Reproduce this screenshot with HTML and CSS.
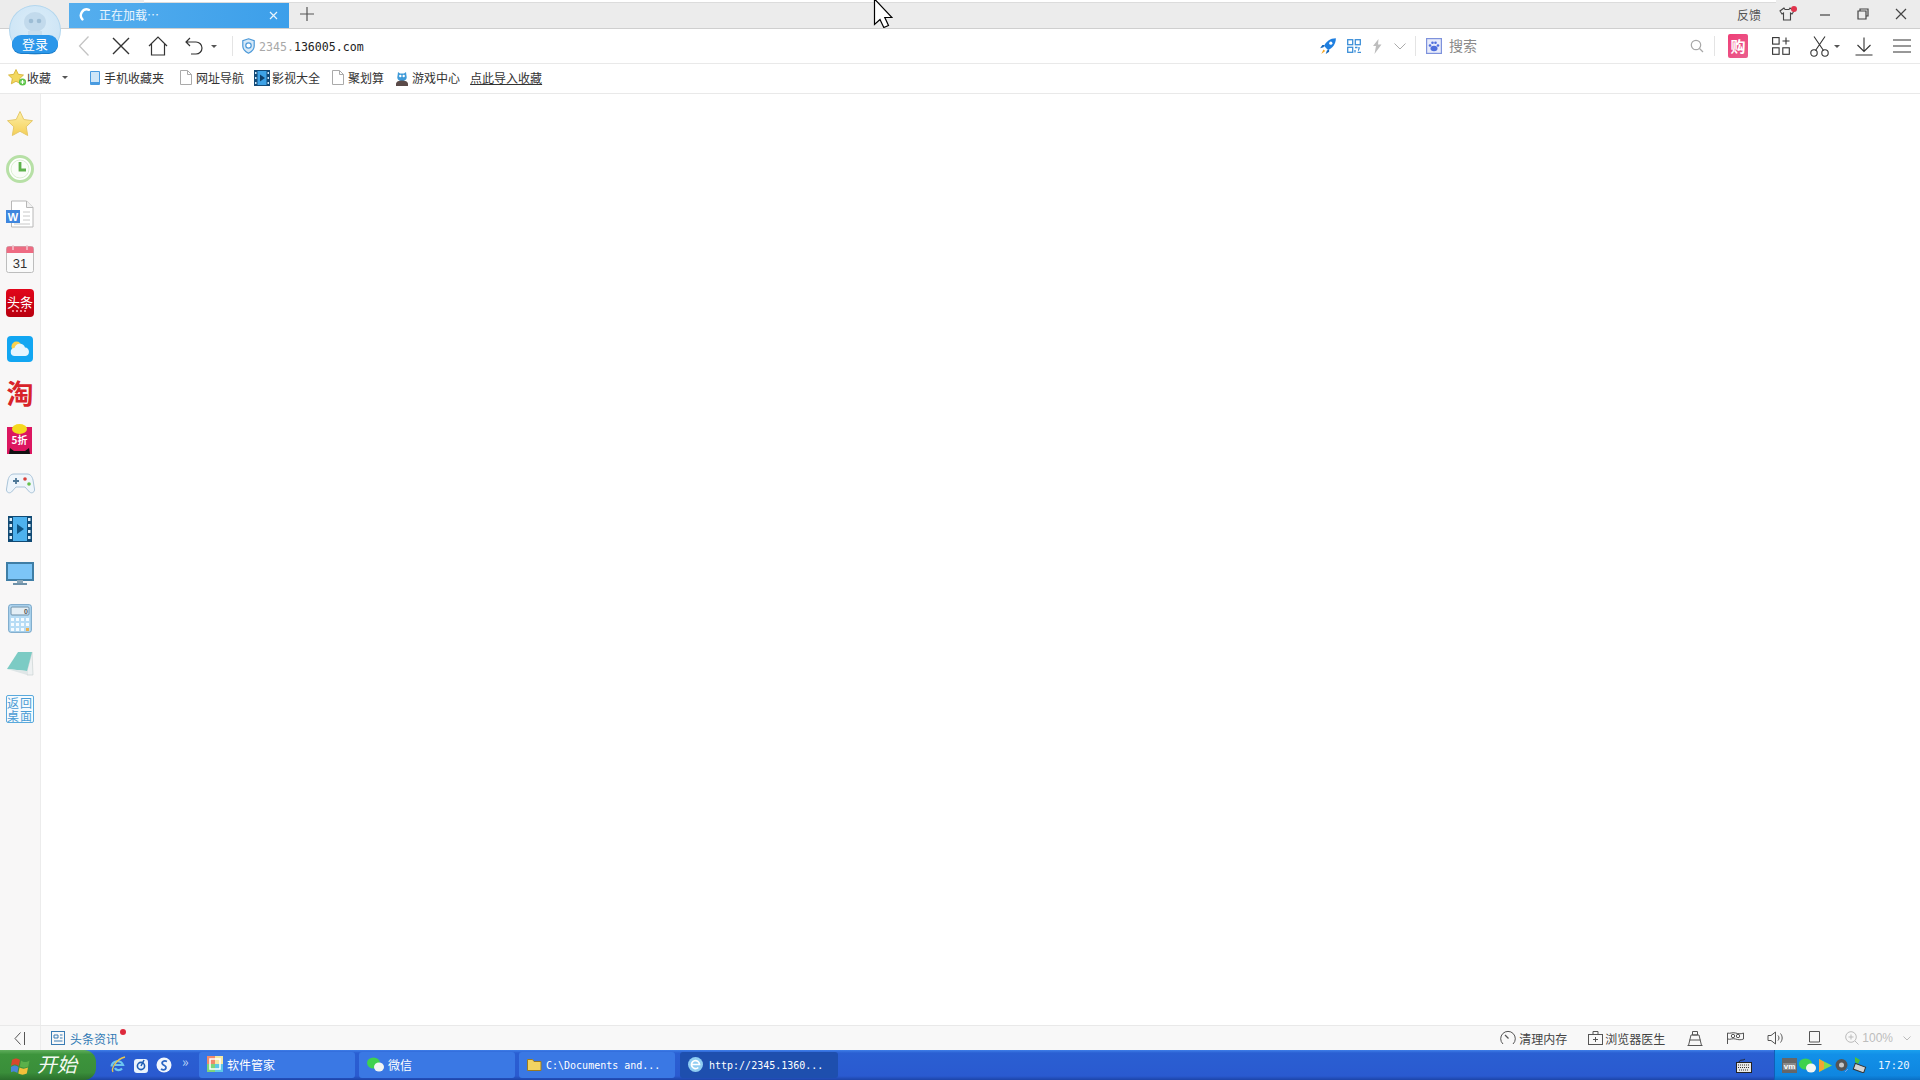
FILE: index.html
```html
<!DOCTYPE html>
<html lang="zh-CN">
<head>
<meta charset="utf-8">
<title>正在加载…</title>
<link rel="stylesheet" href="styles.css">
</head>
<body>
<div class="app">
  <header class="titlebar">
    <div class="top-strip"></div>
    <div class="tab">
      <svg class="spinner" width="15" height="15" viewBox="0 0 15 15"><path d="M10 1.800A6 6 0 0 0 3.400 11.400" fill="none" stroke="#fff" stroke-width="2.400" stroke-linecap="round"/></svg>
      <span class="tab-title">正在加载…</span>
      <svg class="tab-close" width="9" height="9" viewBox="0 0 9 9"><path d="M1 1l7 7M8 1l-7 7" stroke="#e8f4fd" stroke-width="1.2"/></svg>
    </div>
    <svg class="new-tab" width="14" height="14" viewBox="0 0 14 14"><path d="M7 0v14M0 7h14" stroke="#555" stroke-width="1.2"/></svg>
    <div class="win-tools">
      <span class="feedback">反馈</span>
      <span class="win-btn shirt">
        <svg width="16" height="16" viewBox="0 0 16 16"><path d="M5 2L1 5l2 3 1.5-1v7h7V7L13 8l2-3-4-3-1 1.5H6z" fill="none" stroke="#444" stroke-width="1.1"/></svg>
        <i class="shirt-dot"></i>
      </span>
      <span class="win-btn"><svg width="11" height="11" viewBox="0 0 11 11"><path d="M0 6h10" stroke="#444" stroke-width="1.2"/></svg></span>
      <span class="win-btn"><svg width="12" height="12" viewBox="0 0 12 12"><path d="M3 3V1h8v7H9M1 3h8v8H1z" fill="none" stroke="#444" stroke-width="1.2"/></svg></span>
      <span class="win-btn"><svg width="12" height="12" viewBox="0 0 12 12"><path d="M1 1l10 10M11 1L1 11" stroke="#444" stroke-width="1.2"/></svg></span>
    </div>
  </header>

  <nav class="toolbar">
    <div class="tool-left">
      <span class="tool"><svg width="12" height="22" viewBox="0 0 12 22"><path d="M10.5 1.5L1.5 11l9 9.5" fill="none" stroke="#c4c4c4" stroke-width="1.3"/></svg></span>
      <span class="tool"><svg width="18" height="18" viewBox="0 0 18 18"><path d="M1 1l16 16M17 1L1 17" stroke="#333" stroke-width="1.4"/></svg></span>
      <span class="tool"><svg width="20" height="20" viewBox="0 0 20 20"><path d="M1 10l9-9 9 9M3.500 8v11h13V8" fill="none" stroke="#333" stroke-width="1.2"/></svg></span>
      <span class="tool tool-undo"><svg width="18" height="18" viewBox="0 0 18 18"><path d="M5 1L1 5l4 4M1 5h10a5.500 5.500 0 0 1 0 12H6" fill="none" stroke="#333" stroke-width="1.2"/></svg></span>
      <i class="caret"></i>
      <i class="sep sep-url"></i>
      <svg class="shield" width="13" height="16" viewBox="0 0 13 16"><path d="M6.500 .8L12.200 2.800V8c0 3.500-3 6-5.700 7.200C3.800 14 .8 11.500 .8 8V2.800z" fill="#d6e9f8" stroke="#4a98d8" stroke-width="1.200"/><circle cx="6.500" cy="7.500" r="2.700" fill="#fff" stroke="#4a98d8" stroke-width="1.200"/></svg>
      <span class="url"><span class="url-dim">2345.</span>136005.com</span>
    </div>
    <div class="tool-right">
      <svg class="i-rocket" width="18" height="18" viewBox="0 0 16 16"><path d="M15 1C10 1 6 4 4.500 8l3.500 3.500C12 10 15 6 15 1z" fill="#1f7fe0"/><circle cx="10.500" cy="5.500" r="1.400" fill="#fff"/><path d="M4 9L1 10l2-3 2 0zM7 12l-1 3 3-2 0-2z" fill="#1266bb"/><path d="M4 11l1.500 1.500L2 15z" fill="#f5a623"/></svg>
      <svg class="i-qr" width="14" height="14" viewBox="0 0 14 14" fill="none" stroke="#3c8fd8" stroke-width="1.300"><rect x=".7" y=".7" width="5" height="5"/><rect x="8.300" y=".7" width="5" height="5"/><rect x=".7" y="8.300" width="5" height="5"/><path d="M8 8.500h2.500M12 8v2.500M8 11v2.500M10.500 13.300H14M11 11h1" /></svg>
      <svg class="i-bolt" width="10" height="15" viewBox="0 0 10 15"><path d="M6.500 0L1 7h3L2.500 15 9.500 5.500H6z" fill="#bdbdbd"/></svg>
      <svg class="i-chev" width="12" height="7" viewBox="0 0 12 7"><path d="M.5 .5L6 6l5.500-5.500" fill="none" stroke="#aaa"/></svg>
      <i class="sep sep-search"></i>
      <svg class="i-paw" width="16" height="16" viewBox="0 0 16 16"><rect x=".6" y=".6" width="14.800" height="14.800" fill="#e8ecfb" stroke="#7e92dc" stroke-width="1.200"/><g fill="#4f6fdc"><ellipse cx="8" cy="10.500" rx="3.500" ry="2.800"/><circle cx="4" cy="7.500" r="1.300"/><circle cx="6.500" cy="4.800" r="1.300"/><circle cx="9.500" cy="4.800" r="1.300"/><circle cx="12" cy="7.500" r="1.300"/></g></svg>
      <span class="search-text">搜索</span>
      <svg class="i-search" width="14" height="14" viewBox="0 0 14 14"><circle cx="6" cy="6" r="4.700" fill="none" stroke="#a8a8a8" stroke-width="1.200"/><path d="M9.500 9.500L13 13" stroke="#a8a8a8" stroke-width="1.200"/></svg>
      <i class="sep sep-gou"></i>
      <span class="gou">购</span>
      <svg class="i-apps" width="18" height="18" viewBox="0 0 18 18" fill="none" stroke="#333" stroke-width="1.100"><rect x=".6" y=".6" width="6.500" height="6.500"/><rect x=".6" y="10.800" width="6.500" height="6.500"/><rect x="10.800" y="10.800" width="6.500" height="6.500"/><path d="M14 .5v7M10.500 4h7"/></svg>
      <svg class="i-scissors" width="19" height="21" viewBox="0 0 19 21" fill="none" stroke="#333" stroke-width="1.100"><circle cx="4" cy="17" r="3.200"/><circle cx="15" cy="17" r="3.200"/><path d="M5.500 14.500L15 .5M13.500 14.500L4 .5"/></svg>
      <i class="caret caret-cut"></i>
      <svg class="i-down" width="18" height="19" viewBox="0 0 18 19" fill="none" stroke="#333" stroke-width="1.100"><path d="M9 .5v14M2.500 8L9 14.500 15.500 8M.5 18h17"/></svg>
      <svg class="i-menu" width="18" height="14" viewBox="0 0 18 14" stroke="#333" stroke-width="1.100"><path d="M0 1h18M0 7h18M0 13h18"/></svg>
    </div>
  </nav>

  <div class="bookmarks">
    <svg class="bm-star" width="20" height="18" viewBox="0 0 20 18"><path d="M8 .5l2.300 4.800 5.200.7-3.800 3.600.9 5.200L8 12.300 3.400 14.800l.9-5.200L.5 6l5.200-.7z" fill="#f3d860" stroke="#d2ad2c" stroke-width=".8"/><circle cx="14.500" cy="13" r="3.600" fill="#5ec44a"/><path d="M14.500 11v4M12.500 13h4" stroke="#fff" stroke-width="1.200"/></svg>
    <span class="bm-text bm-fav">收藏</span>
    <i class="caret caret-fav"></i>
    <span class="bm bm-phone">
      <svg width="10" height="14" viewBox="0 0 10 14"><rect width="10" height="14" rx="1" fill="#4a9be0"/><rect x="1" y="1" width="8" height="10" fill="#cfe6f8"/></svg>
      <span>手机收藏夹</span>
    </span>
    <span class="bm bm-nav">
      <svg width="12" height="15" viewBox="0 0 12 15"><path d="M.5 .5h7l4 4v10H.5zM7.500 .5v4h4" fill="#fff" stroke="#aaa"/></svg>
      <span>网址导航</span>
    </span>
    <span class="bm bm-film">
      <svg width="16" height="16" viewBox="0 0 16 16"><rect width="16" height="16" fill="#134a78"/><rect x="3.500" y="1" width="9" height="14" fill="#3ea2e6"/><path d="M6 4.500l5 3.500-5 3.500z" fill="#0e3f6b"/><path d="M1 2h1.500v2H1zM1 7h1.500v2H1zM1 12h1.500v2H1zM13.500 2H15v2h-1.500zM13.500 7H15v2h-1.500zM13.500 12H15v2h-1.500z" fill="#cfe9fb"/></svg>
      <span>影视大全</span>
    </span>
    <span class="bm bm-juhua">
      <svg width="12" height="15" viewBox="0 0 12 15"><path d="M.5 .5h7l4 4v10H.5zM7.500 .5v4h4" fill="#fff" stroke="#aaa"/></svg>
      <span>聚划算</span>
    </span>
    <span class="bm bm-game">
      <svg width="14" height="16" viewBox="0 0 14 16"><path d="M3 2l2 1.500h4L11 2l.5 4c1 3-1.500 5-4.500 5S1.500 9 2.500 6z" fill="#3f9ad8"/><circle cx="5.300" cy="6" r="1.200" fill="#fff"/><circle cx="8.700" cy="6" r="1.200" fill="#fff"/><path d="M1 14c0-2.500 3-3.500 6-3.500s6 1 6 3.500v2H1z" fill="#5a4a48"/></svg>
      <span>游戏中心</span>
    </span>
    <span class="bm-text bm-import">点此导入收藏</span>
  </div>

  <main class="workspace">
    <aside class="sidebar">
      <span class="side-item">
        <svg width="28" height="28" viewBox="0 0 28 28"><defs><linearGradient id="gStar" x1="0" y1="0" x2="0" y2="1"><stop offset="0" stop-color="#fdf0a8"/><stop offset="1" stop-color="#f5cf58"/></linearGradient></defs><path d="M14 1.500l3.800 8 8.700 1.200-6.300 6.100 1.500 8.700L14 21.300l-7.700 4.200 1.500-8.700L1.500 10.700l8.700-1.200z" fill="url(#gStar)" stroke="#e6c96a"/></svg>
      </span>
      <span class="side-item">
        <svg width="28" height="28" viewBox="0 0 28 28"><circle cx="14" cy="14" r="12.500" fill="#fff" stroke="#b7e0a6" stroke-width="3"/><circle cx="14" cy="14" r="9" fill="#fafdf8" stroke="#dbeed2"/><path d="M14 7v8h6" fill="none" stroke="#5eb24c" stroke-width="2.800"/></svg>
      </span>
      <span class="side-item">
        <svg width="28" height="28" viewBox="0 0 28 28"><path d="M5.500 1h15l6.500 6.500V27H5.500z" fill="#fff" stroke="#b8b8b8"/><path d="M20.500 1v6.500H27" fill="#f1f1f1" stroke="#b8b8b8"/><path d="M17 12h7M17 16h7M17 20h7M8 24h16" stroke="#c8c8c8"/><rect y="10" width="14" height="13" fill="#3f86de"/><text x="7" y="21" class="t-word">W</text></svg>
      </span>
      <span class="side-item">
        <svg width="28" height="28" viewBox="0 0 28 28"><rect x=".5" y="1.500" width="27" height="26" rx="2" fill="#fafafa" stroke="#bdbdbd"/><path d="M.5 8V3.500a2 2 0 0 1 2-2h23a2 2 0 0 1 2 2V8z" fill="#ee6b82"/><path d="M7 0v5M21 0v5" stroke="#f5c5cf" stroke-width="1.500"/><text x="14" y="23" class="t-cal">31</text></svg>
      </span>
      <span class="side-item side-toutiao">
        <span class="toutiao-text">头条</span>
        <i class="toutiao-dots"></i>
      </span>
      <span class="side-item">
        <svg width="26" height="26" viewBox="0 0 26 26"><rect width="26" height="26" rx="4" fill="#12a6f2"/><circle cx="9.500" cy="10.500" r="5" fill="#fbd24e"/><path d="M8 20a4 4 0 0 1-.5-8 5.500 5.500 0 0 1 10.500-.5 4.300 4.300 0 0 1 .5 8.500z" fill="#e6f5fe"/></svg>
      </span>
      <span class="side-item side-tao">淘</span>
      <span class="side-item">
        <svg width="26" height="30" viewBox="0 0 26 30"><rect y="3" width="25" height="27" fill="#dc1660"/><ellipse cx="12.500" cy="5" rx="7.500" ry="5" fill="#f5d91e"/><path d="M2 30l1-6 4 3h11l4-3 1 6z" fill="#111"/><text x="12.500" y="20" class="t-five">5折</text></svg>
      </span>
      <span class="side-item">
        <svg width="29" height="23" viewBox="0 0 29 23"><path d="M8 2h13c3 0 5 2 6 6l1.500 9c.5 3-2.500 5-5 3l-4.500-5H10l-4.500 5c-2.500 2-5.500 0-5-3L2 8c1-4 3-6 6-6z" fill="#eef5fb" stroke="#a9c3d8"/><path d="M7 9h6M10 6v6" stroke="#4e7897" stroke-width="1.800"/><circle cx="19" cy="7" r="1.800" fill="#d9413a"/><circle cx="23" cy="12" r="1.800" fill="#67c04c"/></svg>
      </span>
      <span class="side-item">
        <svg width="24" height="26" viewBox="0 0 24 26"><rect width="24" height="26" fill="#114a74"/><rect x="5" y="1" width="14" height="24" fill="#4eb2ee"/><path d="M9 8l7 5-7 5z" fill="#0f5584"/><path d="M1.500 2H4v3H1.500zM1.500 8H4v3H1.500zM1.500 14H4v3H1.500zM1.500 20H4v3H1.500zM20 2h2.500v3H20zM20 8h2.500v3H20zM20 14h2.500v3H20zM20 20h2.500v3H20z" fill="#e0f2fc"/></svg>
      </span>
      <span class="side-item">
        <svg width="28" height="23" viewBox="0 0 28 23"><rect x="1" y="1" width="26" height="17" fill="#7cc5f7" stroke="#3f7ea6" stroke-width="2"/><rect x="11" y="18" width="6" height="3" fill="#8aa6b8"/><rect x="7" y="21" width="14" height="2" fill="#6e91a8"/></svg>
      </span>
      <span class="side-item">
        <svg width="24" height="29" viewBox="0 0 24 29"><rect x=".7" y=".7" width="22.600" height="27.600" rx="2" fill="#b7dcf5" stroke="#6c9fc4"/><rect x="3" y="3" width="18" height="8" rx="1" fill="#e4eef5" stroke="#6c8fa8"/><text x="18" y="10" class="t-zero">0</text><path d="M3 14h3v3H3zM8 14h3v3H8zM13 14h3v3h-3zM3 19h3v3H3zM8 19h3v3H8zM13 19h3v3h-3zM3 24h3v3H3zM8 24h3v3H8zM13 24h3v3h-3z" fill="#f5fbff"/><path d="M18 14h3v3h-3zM18 19h3v3h-3z" fill="#f5fbff"/><path d="M18 24h3v3h-3z" fill="#e9b054"/></svg>
      </span>
      <span class="side-item">
        <svg width="28" height="25" viewBox="0 0 28 25"><path d="M26 1l1 23h-6v-4z" fill="#eef1f2" stroke="#c3cccd" stroke-width=".6"/><path d="M1 18L12 1h14l-5 19z" fill="#7ccbc4"/><path d="M1 18l20 2v4z" fill="#dfe6e7"/></svg>
      </span>
      <span class="side-item">
        <span class="back-desk">返回桌面</span>
      </span>
    </aside>
    <section class="page"></section>
  </main>

  <footer class="statusbar">
    <span class="collapse">
      <svg width="12" height="13" viewBox="0 0 12 13"><path d="M6.500 .5L1 6.500l5.500 6M10.500 0v13" fill="none" stroke="#555"/></svg>
    </span>
    <svg class="news-icon" width="14" height="14" viewBox="0 0 14 14" fill="none" stroke="#3a7cb4"><rect x=".5" y=".5" width="13" height="13"/><path d="M3 4h4v3H3zM9 4h2.500M9 7h2.500M3 10h8.500"/></svg>
    <span class="news-text">头条资讯<i class="news-dot"></i></span>
    <div class="status-right">
      <svg class="s-gauge" width="16" height="16" viewBox="0 0 16 16" fill="none" stroke="#555"><path d="M3 14A7.300 7.300 0 1 1 13 14"/><path d="M5 5l3.500 3.500" stroke-width="1.200"/></svg>
      <span class="s-text s-clean">清理内存</span>
      <svg class="s-doctor" width="15" height="14" viewBox="0 0 15 14" fill="none" stroke="#555"><rect x=".5" y="3.500" width="14" height="10"/><path d="M5 3.500V.5h5v3M7.500 6v5M5 8.500h5"/></svg>
      <span class="s-text s-doc-text">浏览器医生</span>
      <svg class="s-broom" width="16" height="15" viewBox="0 0 16 15" fill="none" stroke="#555"><path d="M5.500 4h5V.5h-5zM1.500 14.500L4 4h8l2.500 10.500zM.5 14.500h15M2.500 9h11"/></svg>
      <svg class="s-flag" width="17" height="12" viewBox="0 0 17 12" fill="none" stroke="#555"><path d="M.5 12V1C3 2 5 0 8.500 1c3 1 6 1 8 0v6c-2 1-5 1-8 0C5.500 6 3 8 1 7"/><circle cx="6" cy="4" r="1.700"/><circle cx="11" cy="4" r="1.700"/></svg>
      <svg class="s-sound" width="16" height="14" viewBox="0 0 16 14" fill="none" stroke="#555"><path d="M1 4.500h3L8.500 1v12L4 9.500H1zM11 4.500c1.300 1.500 1.300 3.500 0 5M13.500 2.500c2.200 2.800 2.200 6.200 0 9"/></svg>
      <svg class="s-window" width="15" height="14" viewBox="0 0 15 14" fill="none" stroke="#555"><path d="M2.500 .5h10v10.500h-10zM.5 13.500h14"/></svg>
      <svg class="s-zoom" width="14" height="14" viewBox="0 0 14 14" fill="none" stroke="#bbb"><circle cx="6" cy="6" r="5.300"/><path d="M6 3.500v5M3.500 6h5M10 10l3.500 3.500"/></svg>
      <span class="s-pct">100%</span>
      <svg class="s-chev" width="8" height="5" viewBox="0 0 8 5"><path d="M.5 .5L4 4l3.500-3.500" fill="none" stroke="#bbb"/></svg>
    </div>
  </footer>

  <div class="taskbar">
    <div class="start">
      <svg width="20" height="19" viewBox="0 0 20 19"><path d="M1 4c3-2 5-2 8 0l-1.300 6C5 8 3 8 0 10z" fill="#d8472c"/><path d="M10 4.500c3 2 5 2 8.500 0L17.300 10.500c-3 1.500-5.500 1.500-8.500 0z" fill="#5bb04a"/><path d="M0 11c3-2 5-2 7.500 0L6.300 17c-3-2-5-2-7.500 0z" fill="#4a86d8"/><path d="M8.500 11.500c3 1.500 5 1.500 8.500 0L15.800 17.500c-3 1.500-5.500 1.500-8.500 0z" fill="#f2c03a"/></svg>
      <span class="start-text">开始</span>
    </div>
    <div class="quick">
      <svg width="16" height="18" viewBox="0 0 16 18"><path d="M1.500 10.500a6 6 0 0 1 11.500-1.500H5M5 12c1 2.500 5 3 7 .5" fill="none" stroke="#6bc6f0" stroke-width="2.200"/><path d="M3 16C1 13 6 3 15 1" fill="none" stroke="#e9c64f" stroke-width="1.300"/></svg>
      <svg width="16" height="16" viewBox="0 0 16 16"><rect x="1" y="2" width="14" height="14" rx="3" fill="#eaf4fd"/><circle cx="8" cy="9" r="3.600" fill="none" stroke="#1e5fb4" stroke-width="1.600"/><path d="M8 9l3-6" stroke="#1e5fb4" stroke-width="1.600"/></svg>
      <svg width="16" height="16" viewBox="0 0 16 16"><circle cx="8" cy="8" r="7.500" fill="#f2f7fd"/><path d="M11 4.500C8 3 5 5 6.500 7s4 1.500 3.500 4-3.500 2-5 1" fill="none" stroke="#2b68c4" stroke-width="1.800"/></svg>
      <span class="more">»</span>
    </div>
    <div class="tasks">
      <span class="task">
        <svg width="16" height="16" viewBox="0 0 16 16"><rect width="16" height="16" fill="#f5e8a0"/><path d="M0 0h8v8H0z" fill="#ef8a6c"/><path d="M8 8h8v8H8z" fill="#5dc9e6"/><path d="M0 8h8v8H0z" fill="#7fd47a"/><rect x="3" y="3" width="10" height="10" fill="none" stroke="#fff" stroke-width="1.500"/></svg>
        <span>软件管家</span>
      </span>
      <span class="task">
        <svg width="17" height="15" viewBox="0 0 17 15"><ellipse cx="6.500" cy="6" rx="6.500" ry="5.500" fill="#3fd24d"/><ellipse cx="12" cy="10" rx="5" ry="4.500" fill="#f2f6f2"/></svg>
        <span>微信</span>
      </span>
      <span class="task">
        <svg width="15" height="13" viewBox="0 0 15 13"><path d="M.5 12.500V1.500h5l1.500 2h7v9z" fill="#f2d463" stroke="#9a7a20"/></svg>
        <span class="mono">C:\Documents and...</span>
      </span>
      <span class="task task-active">
        <svg width="15" height="15" viewBox="0 0 15 15"><circle cx="7.500" cy="7.500" r="7.500" fill="#8fcdf2"/><path d="M3.500 7.500h8a4 4 0 1 0-1.200 3" fill="none" stroke="#fff" stroke-width="1.700"/></svg>
        <span class="mono">http://2345.1360...</span>
      </span>
    </div>
    <svg class="kbd" width="16" height="15" viewBox="0 0 16 15"><path d="M3 4C4 1 7 3 9 1" fill="none" stroke="#222"/><rect x=".5" y="4.500" width="15" height="10" fill="#e8e8e8" stroke="#222"/><path d="M2 7h12M2 9.500h12M3 12h10" stroke="#333" stroke-dasharray="1 1"/></svg>
    <div class="tray">
      <svg width="15" height="15" viewBox="0 0 15 15"><rect width="15" height="15" fill="#666"/><rect x="1" y="5" width="13" height="7" fill="#8a8a8a"/><text x="7.500" y="11" class="t-vm">vm</text></svg>
      <svg width="17" height="15" viewBox="0 0 17 15"><ellipse cx="6.500" cy="6" rx="6.500" ry="5.500" fill="#3fd24d"/><ellipse cx="12" cy="10" rx="5" ry="4.500" fill="#f2f6f2"/></svg>
      <svg width="15" height="15" viewBox="0 0 15 15"><path d="M1 1l13 6.500L1 14z" fill="#7fdc4c"/><path d="M1 1v13l5-3V4z" fill="#f2a534"/></svg>
      <svg width="15" height="15" viewBox="0 0 15 15"><circle cx="6.500" cy="7" r="6" fill="#555"/><circle cx="6.500" cy="7" r="2.500" fill="#c8c8c8"/><path d="M10 14l3-3" stroke="#7c9fe8"/></svg>
      <svg width="15" height="16" viewBox="0 0 15 16"><path d="M3 0l5 3-2 4-3-2z" fill="#4fbf3a"/><rect x="2" y="8" width="11" height="6" transform="rotate(20 7 11)" fill="#d4d4d4" stroke="#333"/></svg>
      <span class="clock">17:20</span>
    </div>
  </div>

  <svg class="cursor" width="20" height="28" viewBox="0 0 20 28"><path d="M1.500 -1V24.500L7 19.500 10.800 27.500 15.500 25.500 11.800 17.500H19z" fill="#fff" stroke="#000" stroke-width="1.200"/></svg>

  <div class="avatar">
    <svg class="avatar-face" width="30" height="28" viewBox="0 0 30 28"><ellipse cx="15" cy="13" rx="11" ry="10" fill="#c2daec"/><path d="M8 22h14v6H8z" fill="#c8deee"/><circle cx="11" cy="12" r="2.300" fill="#9dbdd5"/><circle cx="19" cy="12" r="2.300" fill="#9dbdd5"/></svg>
    <span class="login">登录</span>
  </div>
</div>
</body>
</html>
```

FILE: styles.css
```css
* { box-sizing: border-box; }
html, body { margin: 0; height: 100%; }
body {
  font-family: "Noto Sans CJK SC", "Liberation Sans", sans-serif;
  font-size: 12px;
  color: #333;
  background: #fff;
  overflow: hidden;
}
svg { display: block; flex: none; }
i { font-style: normal; display: block; }

.app { position: relative; width: 1920px; height: 1080px; display: flex; flex-direction: column; }

/* title bar */
.titlebar {
  position: relative;
  height: 29px;
  flex: none;
  display: flex;
  align-items: flex-end;
  padding-left: 69px;
  background: #ececec;
  border-bottom: 1px solid #cfcfcf;
}
.top-strip {
  position: absolute;
  left: 144px;
  right: 144px;
  top: 0;
  height: 3px;
  background: #fff;
  border-bottom: 1px solid #dcdcdc;
}
.tab {
  position: relative;
  width: 220px;
  height: 25px;
  display: flex;
  align-items: center;
  padding: 0 11px 0 10px;
  background: linear-gradient(90deg, #55aeee, #3c9fea);
  color: #eaf5fd;
}
.tab-title { margin: -2px 0 0 5px; flex: 1; white-space: nowrap; line-height: 25px; }
.new-tab { margin: 0 0 7px 11px; }
.win-tools { margin-left: auto; height: 28px; display: flex; align-items: center; }
.feedback { color: #555; margin-right: 7px; }
.win-btn { position: relative; width: 38px; height: 28px; display: flex; align-items: center; justify-content: center; }
.shirt-dot { position: absolute; left: 23px; top: 6px; width: 6px; height: 6px; border-radius: 50%; background: #e0344c; }

/* toolbar */
.toolbar {
  height: 35px;
  flex: none;
  display: flex;
  align-items: center;
  justify-content: space-between;
  background: #fff;
  border-bottom: 1px solid #e9e9e9;
}
.tool-left { display: flex; align-items: center; padding-left: 65px; }
.tool { width: 37px; height: 34px; display: flex; align-items: center; justify-content: center; }
.tool-undo { width: 35px; }
.caret { width: 0; height: 0; border-style: solid; border-width: 3px 3px 0; border-color: #555 transparent transparent; }
.sep { width: 1px; height: 20px; background: #e4e4e4; }
.sep-url { margin-left: 15px; }
.shield { margin-left: 9px; }
.url { margin-left: 4px; padding-top: 2px; font-family: "DejaVu Sans Mono", monospace; font-size: 11.6px; color: #222; white-space: nowrap; }
.url-dim { color: #a8a8a8; }

.tool-right { display: flex; align-items: center; padding-right: 9px; }
.i-qr { margin-left: 10px; }
.i-bolt { margin-left: 11px; }
.i-chev { margin-left: 12px; }
.sep-search { margin-left: 9px; }
.i-paw { margin-left: 10px; }
.search-text { margin-left: 7px; width: 241px; font-size: 14px; line-height: 20px; margin-top: -2px; color: #8a8a8a; }
.i-search { margin-left: 0; }
.sep-gou { margin-left: 10px; }
.gou {
  margin-left: 13px;
  width: 20px;
  height: 24px;
  border-radius: 2px;
  background: linear-gradient(135deg, #ef3f77, #ea5f8f);
  color: #fff;
  font-size: 15px;
  font-weight: 700;
  line-height: 24px;
  text-align: center;
}
.i-apps { margin-left: 24px; }
.i-scissors { margin-left: 20px; }
.caret-cut { margin-left: 5px; }
.i-down { margin-left: 15px; }
.i-menu { margin-left: 20px; }

/* bookmarks */
.bookmarks {
  height: 30px;
  flex: none;
  display: flex;
  align-items: center;
  padding: 0 0 2px 8px;
  background: #fff;
  border-bottom: 1px solid #e9e9e9;
  white-space: nowrap;
}
.bm { display: flex; align-items: center; gap: 4px; }
.bm-fav { margin-left: -1px; }
.caret-fav { margin-left: 11px; }
.bm-phone { margin-left: 22px; }
.bm-nav { margin-left: 16px; }
.bm-film { margin-left: 10px; gap: 2px; }
.bm-juhua { margin-left: 12px; }
.bm-game { margin-left: 11px; gap: 3px; }
.bm-import { margin-left: 10px; text-decoration: underline; }

/* workspace */
.workspace { flex: 1; min-height: 0; display: flex; }
.sidebar {
  width: 41px;
  flex: none;
  display: flex;
  flex-direction: column;
  padding-top: 7px;
  background: #f8f7f7;
  border-right: 1px solid #ececec;
}
.side-item { height: 45px; flex: none; display: flex; align-items: center; justify-content: center; }
.side-toutiao {
  position: relative;
  flex-direction: column;
  width: 28px;
  height: 28px;
  margin: 8px 6px 9px;
  gap: 0;
  border-radius: 4px;
  background: linear-gradient(#e2061b, #b9000f);
  color: #fff;
}
.toutiao-text { font-size: 13px; line-height: 17px; letter-spacing: 0; white-space: nowrap; margin-top: -1px; }
.toutiao-dots { width: 16px; height: 2px; background: repeating-linear-gradient(90deg, #f08a94 0 2px, transparent 2px 4px); }
.side-tao { font-size: 27px; font-weight: 700; color: #d8232a; line-height: 1; padding-bottom: 2px; }
.back-desk {
  width: 28px;
  height: 28px;
  display: block;
  border: 1px solid #5aa9dc;
  border-radius: 2px;
  background: #f6fbfe;
  color: #4a9cd4;
  font-size: 12px;
  letter-spacing: 1px;
  line-height: 13px;
  text-align: left;
  word-break: break-all;
}
.t-word { fill: #fff; font: 700 11px "Liberation Sans", sans-serif; text-anchor: middle; }
.t-cal { fill: #333; font: 13px "Liberation Sans", sans-serif; text-anchor: middle; }
.t-five { fill: #fff; font: 700 10px "Noto Sans CJK SC", sans-serif; text-anchor: middle; }
.t-zero { fill: #555; font: 700 7px "Liberation Sans", sans-serif; text-anchor: middle; }
.t-vm { fill: #fff; font: 700 8px "Liberation Sans", sans-serif; text-anchor: middle; }
.page { flex: 1; background: #fff; }

/* status bar */
.statusbar {
  height: 25px;
  flex: none;
  display: flex;
  align-items: center;
  background: #f8f8f8;
  border-top: 1px solid #e9e9e9;
  white-space: nowrap;
}
.collapse { width: 41px; height: 24px; display: flex; align-items: center; justify-content: center; border-right: 1px solid #ececec; }
.news-icon { margin-left: 10px; }
.news-text { position: relative; margin-left: 5px; color: #2f78b4; }
.news-dot { position: absolute; right: -8px; top: -1px; width: 6px; height: 6px; border-radius: 50%; background: #dd2a3c; }
.status-right { margin-left: auto; display: flex; align-items: center; padding-right: 9px; }
.s-text { color: #444; }
.s-clean { margin-left: 3px; }
.s-doc-text { margin-left: 2px; }
.s-doctor { margin-left: 21px; }
.s-broom { margin-left: 22px; }
.s-flag { margin-left: 24px; }
.s-sound { margin-left: 23px; }
.s-window { margin-left: 24px; }
.s-zoom { margin-left: 23px; }
.s-pct { margin-left: 3px; color: #bdbdbd; font: 12px "Liberation Sans", sans-serif; }
.s-chev { margin-left: 10px; }

/* taskbar */
.taskbar {
  height: 30px;
  flex: none;
  display: flex;
  align-items: center;
  color: #fff;
  background: linear-gradient(#3f7fe8 0, #2a5fd2 3px, #2a5ad0 26px, #1d44a8 100%);
  white-space: nowrap;
}
.start {
  width: 96px;
  height: 30px;
  flex: none;
  display: flex;
  align-items: center;
  padding-left: 11px;
  border-radius: 0 12px 12px 0;
  background: linear-gradient(#5fae5c 0, #3d943c 15%, #3a8e3a 75%, #2a6e2c 100%);
}
.start-text { margin: -2px 0 0 6px; font-size: 20px; font-style: italic; line-height: 30px; color: #f4f9f2; }
.quick { flex: none; display: flex; align-items: center; gap: 7px; margin-left: 14px; width: 89px; padding-left: 0; }
.more { margin: -8px 0 0 3px; font-size: 14px; color: #bcd4f6; }
.tasks { flex: none; display: flex; align-items: center; gap: 4px; }
.task {
  width: 156px;
  height: 26px;
  flex: none;
  display: flex;
  align-items: center;
  gap: 4px;
  padding: 0 0 2px 8px;
  border-radius: 3px;
  background: #3a78e4;
  color: #fff;
  overflow: hidden;
}
.task-active { background: #1e4fae; width: 158px; margin-left: 1px; gap: 6px; }
.mono { margin-top: 2px; font-family: "DejaVu Sans Mono", monospace; font-size: 10px; }
.kbd { flex: none; margin-left: 898px; }
.tray {
  margin-left: 22px;
  flex: 1;
  min-width: 0;
  height: 30px;
  display: flex;
  align-items: center;
  gap: 2px;
  padding-left: 7px;
  background: linear-gradient(#1aa0ee 0, #1290e8 15%, #0f86e0 85%, #0a6fc4 100%);
  border-left: 1px solid #0e5fb8;
}
.clock { margin-left: 9px; font-family: "DejaVu Sans Mono", monospace; font-size: 10.5px; color: #eaf6ff; }

/* overlays */
.cursor { position: absolute; left: 873px; top: 0; }
.avatar {
  position: absolute;
  left: 9px;
  top: 5px;
  width: 52px;
  height: 50px;
  display: flex;
  flex-direction: column;
  align-items: center;
  border-radius: 50%;
  background: radial-gradient(circle at 50% 40%, #dcedf8, #c8e2f5);
  border: 1px solid #b2d6ee;
}
.avatar-face { margin-top: 3px; }
.login {
  position: absolute;
  left: 2px;
  top: 29px;
  width: 46px;
  height: 18px;
  border-radius: 9px;
  background: #2b97ea;
  color: #fff;
  font-size: 13px;
  line-height: 17px;
  text-align: center;
  box-shadow: 0 1px 0 #1a7cc8;
}
```
